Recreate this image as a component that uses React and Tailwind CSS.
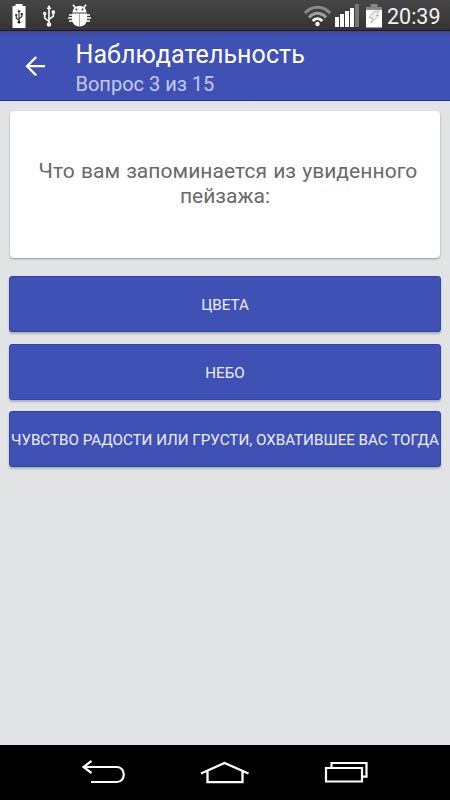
import React from "react";

const answers = [
  "Цвета",
  "Небо",
  "Чувство радости или грусти, охватившее вас тогда",
];

function UsbGlyph(props) {
  return (
    <g {...props}>
      <path
        d="M6 2v17M6 16.500L1.700 13V8.500M6 14.500l4.300-3.500V7"
        fill="none"
        stroke="currentColor"
        strokeWidth="1.600"
      />
      <path d="M6 0l2.400 4H3.600z" fill="currentColor" />
      <circle cx="6" cy="19.500" r="2.200" fill="currentColor" />
      <circle cx="1.700" cy="8.500" r="1.700" fill="currentColor" />
      <path d="M8.700 5.500h3.200v3.200H8.700z" fill="currentColor" />
    </g>
  );
}

function BatteryUsbIcon() {
  return (
    <svg className="h-6 w-4" viewBox="0 0 16 24">
      <path d="M4.500 0h7v2h3v22h-13V2h3z" fill="#fff" />
      <UsbGlyph transform="translate(4.100 5.500) scale(.65)" className="text-[#222]" />
    </svg>
  );
}

function UsbIcon() {
  return (
    <svg className="h-[22px] w-[14px] text-white" viewBox="-.5 0 13 22">
      <UsbGlyph />
    </svg>
  );
}

function BugIcon() {
  return (
    <svg className="h-[23px] w-[23px]" viewBox="0 0 23 23">
      <path
        d="M7.500 4L5 .8M15.500 4L18 .8M5 11H1M5 14H0M5 17H1M18 11h4M18 14h5M18 17h4"
        stroke="#fff"
        strokeWidth="1.600"
      />
      <path d="M4.500 8.500C4.800 4.500 7.500 2 11.500 2s6.700 2.500 7 6.500z" fill="#fff" />
      <path d="M4 9.500h15V15c0 4.500-3.200 7.500-7.500 7.500S4 19.500 4 15z" fill="#fff" />
      <path d="M11.500 10v12" stroke="#aaa" strokeWidth="1" />
      <circle cx="8.500" cy="5.500" r="1" fill="#333" />
      <circle cx="14.500" cy="5.500" r="1" fill="#333" />
    </svg>
  );
}

function WifiIcon() {
  return (
    <svg className="h-[22px] w-[27px]" viewBox="0 0 27 22" fill="none">
      <path d="M1 8.200C8 .3 19 .3 26 8.200" stroke="#8a8a8a" strokeWidth="3" />
      <path d="M5 12.400c5-5.400 12-5.400 17 0" stroke="#a0a0a0" strokeWidth="3" />
      <path d="M8.700 16c3-3.200 6.600-3.200 9.600 0" stroke="#fff" strokeWidth="2.800" />
      <circle cx="13.500" cy="19" r="2.200" fill="#fff" />
    </svg>
  );
}

function SignalIcon() {
  return (
    <svg className="h-[24px] w-[26px]" viewBox="0 0 26 24" fill="#fff">
      <path d="M1 14h4v10H1zM6 11h4v13H6zM11 8h4v16h-4zM16 5h4v19h-4z" />
      <path d="M21 1h4v23h-4z" fill="#777" />
    </svg>
  );
}

function ChargingIcon() {
  return (
    <svg className="h-6 w-4" viewBox="0 0 16 24">
      <path d="M4.500 0h7v3h-7zM0 3h16v4H0z" fill="#888" />
      <path d="M0 6h16v17.500H0z" fill="#fff" />
      <path
        d="M7.500 7.500l5.500-.5-2.500 4.500H13L5 19l2-5H3z"
        fill="#eee"
        stroke="#aaa"
        strokeWidth=".8"
      />
    </svg>
  );
}

function StatusBar() {
  return (
    <div className="flex h-[31px] shrink-0 items-start border-b border-[#1d1b14] bg-linear-to-b from-[#464646] to-[#343434]">
      <div className="flex items-start pt-[4px] pl-[11px]">
        <BatteryUsbIcon />
        <div className="mt-px ml-[15px]">
          <UsbIcon />
        </div>
        <div className="ml-[12px]">
          <BugIcon />
        </div>
      </div>
      <div className="ml-auto flex items-start pt-[4px] pr-[9px]">
        <div className="mt-px mr-[3px]">
          <WifiIcon />
        </div>
        <div className="mr-[6px] -mt-px">
          <SignalIcon />
        </div>
        <ChargingIcon />
        <span className="mt-px ml-[5px] w-[54px] text-[21.500px] leading-6 whitespace-nowrap text-[#f2f2f2]">
          20:39
        </span>
      </div>
    </div>
  );
}

function AppBar() {
  return (
    <header className="flex h-[70px] shrink-0 items-start border-b border-[#1036b4] bg-[#3f51b5] bg-linear-to-b from-[#3a4799] to-[#3f51b5] to-10%">
      <svg className="mt-[25px] ml-[25px] h-5 w-5" viewBox="0 0 20 20" fill="none">
        <path d="M20 10.200H2M11.200 1l-9.200 9.200 9.200 9.200" stroke="#fff" strokeWidth="2.300" />
      </svg>
      <div className="ml-[30.500px] pt-[9px] whitespace-nowrap">
        <h1 className="text-[25px] leading-[30px] tracking-[0.080px] text-white">
          Наблюдательность
        </h1>
        <p className="-mt-px text-[20px] leading-[30px] text-[#c5cae9]">Вопрос 3 из 15</p>
      </div>
    </header>
  );
}

function NavBar() {
  return (
    <nav className="h-[55px] shrink-0 bg-black">
      <svg
        className="h-[55px] w-[450px]"
        viewBox="0 0 450 55"
        fill="none"
        stroke="#fff"
        strokeWidth="2.200"
      >
        <path d="M91.500 16l-8 6 8 6M83.500 22h33.500c9 0 9 15 0 15H91" />
        <path d="M201 28.500L224.500 18 248.500 28.500M207.500 26v11.200h35V26" strokeWidth="2.300" />
        <path d="M326 23h36v13.500h-36zM331.500 22v-4h35v13.700H363" />
      </svg>
    </nav>
  );
}

export default function App() {
  return (
    <div className="flex h-[800px] w-[450px] flex-col overflow-hidden bg-[#e1e3e5] font-['Roboto',sans-serif]">
      <StatusBar />
      <AppBar />
      <main className="flex flex-1 flex-col px-[9px] pt-[10px]">
        <section className="mx-px flex h-[147px] flex-col items-center justify-center rounded-[4px] bg-white pb-[2px] text-[21px] leading-[24.500px] whitespace-nowrap text-[#696969] shadow-[0_1px_2px_rgba(0,0,0,0.35)]">
          <p className="pl-[6px] tracking-[0.060px] [word-spacing:0.800px]">
            Что вам запоминается из увиденного
          </p>
          <p>пейзажа:</p>
        </section>
        <div className="mt-[18.200px] flex flex-col gap-[11.500px]">
          {answers.map((answer) => (
            <button
              key={answer}
              className="flex h-14 items-center justify-center rounded-[3px] border border-[#2c43b4] bg-[#3f51b5] pt-[3px] text-[15.200px] tracking-[-0.020px] whitespace-nowrap text-[#eceefa] uppercase shadow-[0_2px_2px_rgba(0,0,0,0.22)]"
            >
              {answer}
            </button>
          ))}
        </div>
      </main>
      <NavBar />
    </div>
  );
}
